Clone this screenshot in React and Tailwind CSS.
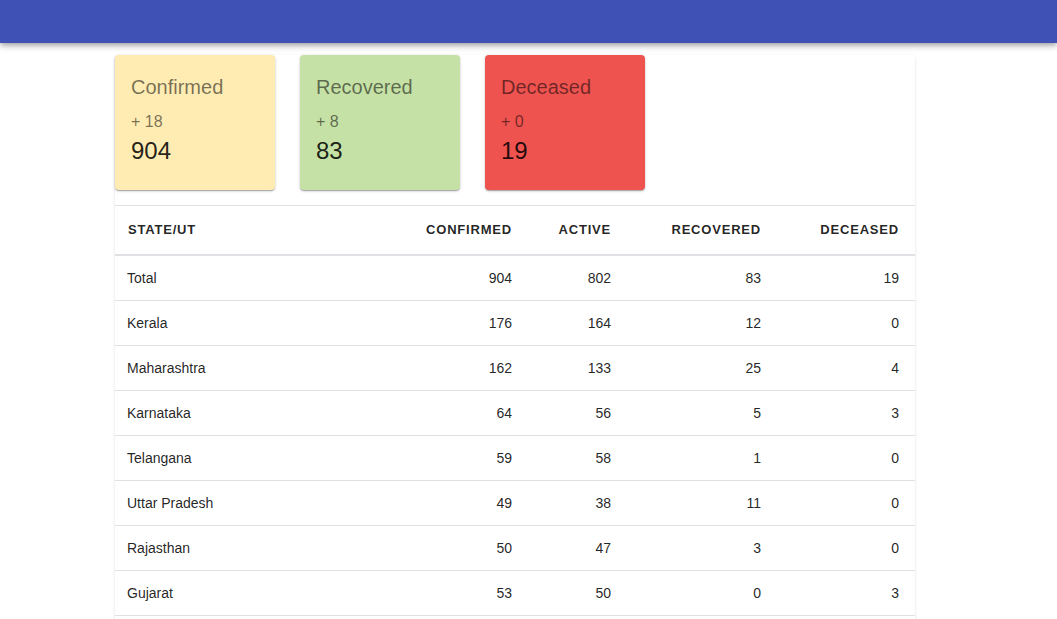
import React from "react";

const rows = [
  ["Total", 904, 802, 83, 19],
  ["Kerala", 176, 164, 12, 0],
  ["Maharashtra", 162, 133, 25, 4],
  ["Karnataka", 64, 56, 5, 3],
  ["Telangana", 59, 58, 1, 0],
  ["Uttar Pradesh", 49, 38, 11, 0],
  ["Rajasthan", 50, 47, 3, 0],
  ["Gujarat", 53, 50, 0, 3],
];

function Card({ bg, title, delta, value }) {
  return (
    <div
      className={`w-[160px] h-[135px] rounded-[4px] px-[16px] pt-[20px] shadow-[0_1px_3px_rgba(0,0,0,0.2),0_1px_1px_rgba(0,0,0,0.14),0_2px_1px_-1px_rgba(0,0,0,0.12)] ${bg}`}
    >
      <div className="text-[20px] leading-[24px] text-[rgba(0,0,0,0.54)]">{title}</div>
      <div className="mt-[11px] text-[16px] leading-[24px] text-[rgba(0,0,0,0.54)]">+ {delta}</div>
      <div className="mt-[1px] text-[24px] leading-[32px] text-[rgba(0,0,0,0.87)]">{value}</div>
    </div>
  );
}

export default function App() {
  return (
    <div
      className="min-h-screen bg-white"
      style={{ fontFamily: '"Liberation Sans", Arial, sans-serif' }}
    >
      <div className="h-[43px] bg-[#3f51b5] shadow-[0_2px_4px_-1px_rgba(0,0,0,0.2),0_4px_5px_0_rgba(0,0,0,0.14),0_1px_10px_0_rgba(0,0,0,0.12)] relative z-10" />
      <div className="w-[800px] ml-[115px] mt-[12px] pb-[24px] bg-white rounded-[4px] shadow-[0_1px_3px_rgba(0,0,0,0.12),0_1px_1px_rgba(0,0,0,0.06)]">
        <div className="flex gap-[25px] h-[150px]">
          <Card bg="bg-[#ffecb3]" title="Confirmed" delta={18} value={904} />
          <Card bg="bg-[#c5e1a5]" title="Recovered" delta={8} value={83} />
          <Card bg="bg-[#ef5350]" title="Deceased" delta={0} value={19} />
        </div>
        <div className="border-t border-[#e0e0e0]">
          <div className="grid grid-cols-[285px_128px_99px_150px_138px] h-[50px] items-center border-b-[2px] border-[#dfe1e5] text-[13px] font-bold tracking-[0.8px] text-[rgba(0,0,0,0.87)]">
            <div className="pl-[13px]">STATE/UT</div>
            <div className="text-right pr-[16px]">CONFIRMED</div>
            <div className="text-right pr-[16px]">ACTIVE</div>
            <div className="text-right pr-[16px]">RECOVERED</div>
            <div className="text-right pr-[16px]">DECEASED</div>
          </div>
          {rows.map((r) => (
            <div
              key={r[0]}
              className="grid grid-cols-[285px_128px_99px_150px_138px] h-[45px] items-center border-b border-[#e0e0e0] text-[14px] text-[rgba(0,0,0,0.87)]"
            >
              <div className="pl-[12px]">{r[0]}</div>
              <div className="text-right pr-[16px]">{r[1]}</div>
              <div className="text-right pr-[16px]">{r[2]}</div>
              <div className="text-right pr-[16px]">{r[3]}</div>
              <div className="text-right pr-[16px]">{r[4]}</div>
            </div>
          ))}
        </div>
      </div>
    </div>
  );
}
